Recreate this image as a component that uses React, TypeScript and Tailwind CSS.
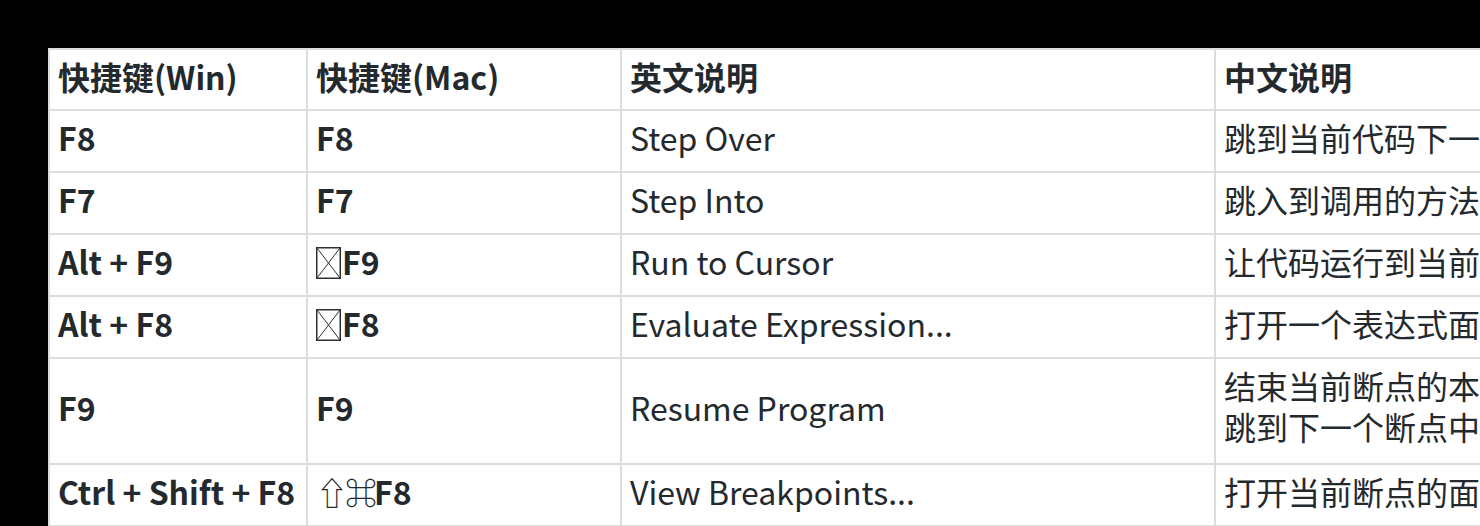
import React from 'react';

interface Row {
  win: string;
  mac: React.ReactNode;
  en: string;
  zh: React.ReactNode;
  tall?: boolean;
}

// the option key shows up as a missing-glyph box in the screenshot
const MissingGlyph: React.FC = () => (
  <svg width="25" height="32" viewBox="0 0 25 32" className="inline-block align-[-4px] mr-[1px]">
    <rect x="0.75" y="0.75" width="23.5" height="30.5" fill="none" stroke="#2b2f33" strokeWidth="1.5" />
    <path d="M1 1L24 31M24 1L1 31" stroke="#2b2f33" strokeWidth="1" />
  </svg>
);

const rows: Row[] = [
  { win: 'F8', mac: 'F8', en: 'Step Over', zh: '跳到当前代码下一行' },
  { win: 'F7', mac: 'F7', en: 'Step Into', zh: '跳入到调用的方法内部代码' },
  { win: 'Alt + F9', mac: <><MissingGlyph />F9</>, en: 'Run to Cursor', zh: '让代码运行到当前光标所在处' },
  { win: 'Alt + F8', mac: <><MissingGlyph />F8</>, en: 'Evaluate Expression...', zh: '打开一个表达式面板，然后进行进一步的计算' },
  {
    win: 'F9',
    mac: 'F9',
    en: 'Resume Program',
    zh: <>结束当前断点的本轮调试（因为有可能代码<br />跳到下一个断点中</>,
    tall: true,
  },
  {
    win: 'Ctrl + Shift + F8',
    mac: <><span className="font-normal tracking-[-3px]">⇧⌘</span>F8</>,
    en: 'View Breakpoints...',
    zh: '打开当前断点的面板，可以进行条件过滤',
  },
];

const cell = 'border-2 border-[#dcdcdc] px-[8px] text-left align-middle whitespace-nowrap';

export default function App() {
  return (
    <div className="bg-black w-[1480px] h-[526px] overflow-hidden pt-[48px] pl-[48px]">
      <table
        className="bg-white text-[#24292e] text-[32px] leading-[40px] border-collapse table-fixed w-[1800px]"
        style={{ fontFamily: '"Noto Sans CJK SC", "Noto Sans", sans-serif' }}
      >
        <colgroup>
          <col className="w-[258px]" />
          <col className="w-[314px]" />
          <col className="w-[594px]" />
          <col className="w-[634px]" />
        </colgroup>
        <thead>
          <tr>
            <th className={`${cell} pt-[6px] pb-[13px] font-bold`}>快捷键(Win)</th>
            <th className={`${cell} pt-[6px] pb-[13px] font-bold`}>快捷键(Mac)</th>
            <th className={`${cell} pt-[6px] pb-[13px] font-bold`}>英文说明</th>
            <th className={`${cell} pt-[6px] pb-[13px] font-bold`}>中文说明</th>
          </tr>
        </thead>
        <tbody>
          {rows.map((r, i) => (
            <tr key={i}>
              <td className={`${cell} pt-[6px] pb-[14px] font-bold`}>{r.win}</td>
              <td className={`${cell} pt-[6px] pb-[14px] font-bold`}>{r.mac}</td>
              <td className={`${cell} pt-[6px] pb-[14px]`}>{r.en}</td>
              <td className={`${cell} pt-[6px] ${r.tall ? 'pb-[16px] leading-[41px]' : 'pb-[14px]'}`}>{r.zh}</td>
            </tr>
          ))}
        </tbody>
      </table>
    </div>
  );
}
